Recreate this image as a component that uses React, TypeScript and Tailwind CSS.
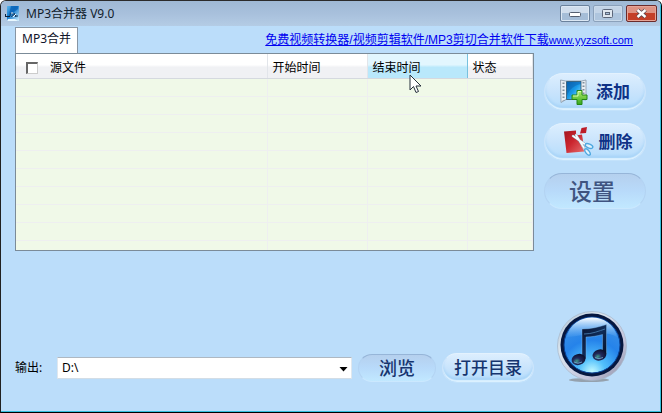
import React from 'react';

const COLUMNS = [
  { label: '源文件', width: 'w-[251px]' },
  { label: '开始时间', width: 'w-[100px]' },
  { label: '结束时间', width: 'w-[100px]', hot: true },
  { label: '状态', width: '' },
];

const EMPTY_ROWS = Array.from({ length: 10 }, (_, i) => i);

const AppIcon = () => (
  <svg width="15" height="16" viewBox="0 0 15 16" aria-hidden="true">
    <defs>
      <linearGradient id="appBg" x1="0" y1="0" x2="1" y2="1">
        <stop offset="0" stopColor="#5fb8ec" />
        <stop offset="0.4" stopColor="#0f78cc" />
        <stop offset="1" stopColor="#d4f2ff" />
      </linearGradient>
    </defs>
    <rect x="2" width="12" height="15" fill="url(#appBg)" />
    <path d="M6 0h7v3L9 6 4 8z" fill="#0a63b8" opacity="0.8" />
    <path d="M0 8h1v3H0zM1 10h4v1H1z" fill="#0a2440" />
    <path d="M5 10c0-3 2-4 3-2s-2 3-2 2M9 7l2 4M10 10h3" fill="none" stroke="#0b2f55" />
    <path d="M6 7h2M8 11l3-3" stroke="#eefaff" />
    <path d="M3 13h7l3 2H2z" fill="#e9f8ff" />
  </svg>
);

const FilmAddIcon = () => (
  <svg width="28" height="26" viewBox="0 0 28 26" aria-hidden="true">
    <defs>
      <linearGradient id="film" x1="0" y1="0" x2="1" y2="1">
        <stop offset="0" stopColor="#0565b4" />
        <stop offset="0.5" stopColor="#199ae8" />
        <stop offset="1" stopColor="#9ce6ff" />
      </linearGradient>
      <linearGradient id="plus" x1="0" y1="0" x2="0" y2="1">
        <stop offset="0" stopColor="#b5f06a" />
        <stop offset="1" stopColor="#34a51d" />
      </linearGradient>
    </defs>
    <path d="M0.500 1l5 1h16l4.500-1v20l-4-0.500H6L1 23.500z" fill="#e9eef4" stroke="#8695a5" strokeWidth="0.8" />
    <path d="M6.500 2.500h14.500v18H6.500z" fill="url(#film)" stroke="#31566f" strokeWidth="0.8" />
    <path d="M7 17c2-7 8-11 14-12V3H7z" fill="#0a5ba8" opacity="0.45" />
    <path d="M3.500 3.500v18M23.500 3v17" stroke="#7f8d9b" strokeWidth="2" strokeDasharray="1.500 2" />
    <path d="M17 11.500h5v4.500h5v4.500h-5v5h-5v-5h-5V16h5z" fill="url(#plus)" stroke="#248816" />
    <path d="M18 12.500h3M13 17h5v-4" fill="none" stroke="#e1ffc0" strokeWidth="0.9" />
  </svg>
);

const CutIcon = () => (
  <svg width="31" height="30" viewBox="0 0 31 30" aria-hidden="true">
    <defs>
      <linearGradient id="cutRed" x1="0" y1="0" x2="1" y2="1">
        <stop offset="0" stopColor="#a2151f" />
        <stop offset="0.45" stopColor="#cb252e" />
        <stop offset="1" stopColor="#e57070" />
      </linearGradient>
    </defs>
    <path d="M0 4.500L12 3.500v5l6-1 1 6-2 5 3.500 6L2.500 26z" fill="url(#cutRed)" />
    <path d="M17.500 1l5.500-1-1 6-6 0.500z" fill="#bd1c27" />
    <path d="M9 9l13 9M12 8l8 13" stroke="#8799ab" strokeWidth="2.600" strokeLinecap="round" />
    <path d="M9 9l13 9M12 8l8 13" stroke="#f6fafc" strokeWidth="1.700" strokeLinecap="round" />
    <ellipse cx="25" cy="19" rx="4" ry="2" transform="rotate(22 25 19)" fill="#e3f3fd" stroke="#4ea8e0" strokeWidth="1.400" />
    <ellipse cx="23.500" cy="25" rx="1.800" ry="3.800" transform="rotate(-38 23.500 25)" fill="#e3f3fd" stroke="#4ea8e0" strokeWidth="1.400" />
  </svg>
);

const MusicDisc = () => (
  <svg width="72" height="72" viewBox="0 0 72 72" role="img" aria-label="MP3">
    <defs>
      <linearGradient id="rim" x1="0" y1="0" x2="1" y2="1">
        <stop offset="0" stopColor="#a9bccf" />
        <stop offset="0.3" stopColor="#dbe6ef" />
        <stop offset="0.7" stopColor="#c3c4dc" />
        <stop offset="1" stopColor="#85889c" />
      </linearGradient>
      <radialGradient id="disc" cx="0.5" cy="0.98" r="0.95">
        <stop offset="0" stopColor="#c6faff" />
        <stop offset="0.25" stopColor="#52c0fc" />
        <stop offset="0.6" stopColor="#2583ea" />
        <stop offset="1" stopColor="#3d92e6" />
      </radialGradient>
      <linearGradient id="shine" x1="0" y1="0" x2="0" y2="1">
        <stop offset="0" stopColor="#fff" />
        <stop offset="1" stopColor="#8cc8ff" stopOpacity="0.1" />
      </linearGradient>
      <linearGradient id="note" x1="0" y1="0" x2="1" y2="1">
        <stop offset="0" stopColor="#0a1430" />
        <stop offset="0.5" stopColor="#0f2c58" />
        <stop offset="1" stopColor="#050d20" />
      </linearGradient>
      <radialGradient id="noteHead" cx="0.35" cy="0.6" r="0.7">
        <stop offset="0" stopColor="#3f9a8c" />
        <stop offset="0.4" stopColor="#222a5c" />
        <stop offset="1" stopColor="#070d26" />
      </radialGradient>
    </defs>
    <ellipse cx="33" cy="69" rx="20" ry="2" fill="#77706e" opacity="0.55" />
    <circle cx="36" cy="35" r="34.500" fill="url(#rim)" stroke="#a6b6c8" strokeWidth="0.7" />
    <circle cx="36" cy="34" r="31.500" fill="#06173f" />
    <circle cx="36" cy="34" r="28" fill="url(#disc)" stroke="#0a4296" />
    <path d="M11 26C16 0 56 0 61 26C48 18 27 25 11 26z" fill="url(#shine)" />
    <path d="M26 18C35 18 43 16 50.500 13.500V43h-4V23.500C41 25 36 26 30 26V48h-4z" fill="url(#note)" stroke="#8cc3f0" strokeWidth="0.400" />
    <ellipse cx="22.500" cy="48.500" rx="7" ry="5.500" transform="rotate(-15 22.500 48.500)" fill="url(#noteHead)" />
    <ellipse cx="43.500" cy="44" rx="7" ry="5.500" transform="rotate(-15 43.500 44)" fill="url(#noteHead)" />
    <path d="M28 23c8 0 15-3 21-5" fill="none" stroke="#3f6f9f" />
    <path d="M18 51q4 2.500 8 0M39 46.500q4 2.500 8 0" fill="none" stroke="#79b4d8" strokeWidth="0.8" />
  </svg>
);

type PillProps = { className: string; children: React.ReactNode };

const Pill = ({ className, children }: PillProps) => (
  <button
    type="button"
    className={`flex items-center justify-center rounded-full border bg-linear-to-b whitespace-nowrap ${className}`}
  >
    {children}
  </button>
);

const RAISED =
  'from-[#dceefe] via-[#c9e4fc] to-[#b3dcfc] border-t-[#e3f2fe] border-x-[#cde5fb] border-b-[#c3e2fb] shadow-[inset_0_-2px_1px_#dcf1ff,inset_0_-4px_3px_#a5d2f7]';
const SUNKEN =
  'from-[#b5d0ee] via-[#b8dafa] to-[#c1e8ff] border-t-[#96b5d8] border-x-[#b3d3f2] border-b-[#cbe8fe]';

const TitleBar = () => (
  <header className="flex h-[25px] shrink-0 items-center bg-linear-to-b from-[#9fb9d5] via-[#a8c0dc] to-[#b4cce5] pr-[3px] pl-1">
    <AppIcon />
    <h1 className="ml-1.5 text-[12px] text-[#111c2b]">MP3合并器 V9.0</h1>
    <div className="ml-auto flex h-[17px] gap-[3px]">
      <button type="button" aria-label="最小化" className="flex w-[30px] items-center justify-center rounded-xs border border-[#6a819c] bg-linear-to-b from-[#d0ddec] from-45% to-[#a5bdd7] to-50% shadow-[inset_0_0_0_1px_#dce8f4]">
        <svg width="12" height="6" viewBox="0 0 12 6"><rect x="0.500" y="1.500" width="11" height="4" rx="1" fill="#fff" stroke="#555f70" /></svg>
      </button>
      <button type="button" aria-label="最大化" className="flex w-[30px] items-center justify-center rounded-xs border border-[#8ba1bb] bg-linear-to-b from-[#c3d4e7] from-45% to-[#aec5de] to-50% shadow-[inset_0_0_0_1px_#c9daeb]">
        <svg width="12" height="10" viewBox="0 0 12 10"><rect x="0.500" y="0.500" width="10" height="8" rx="1" fill="#dfe7f0" stroke="#5c677a" /><rect x="3.500" y="3.500" width="4" height="2" fill="#a8bfda" stroke="#5c677a" /></svg>
      </button>
      <button type="button" aria-label="关闭" className="flex w-[31px] items-center justify-center rounded-xs border border-[#6b2b2b] bg-linear-to-b from-[#de9283] from-45% to-[#c43f28] to-50% shadow-[inset_0_0_0_1px_#e6a497]">
        <svg width="13" height="11" viewBox="0 0 13 11"><path d="M2.500 2l8 7M10.500 2l-8 7" stroke="#54454f" strokeWidth="4" /><path d="M2.500 2l8 7M10.500 2l-8 7" stroke="#fff" strokeWidth="2.400" /></svg>
      </button>
    </div>
  </header>
);

const FileList = () => (
  <div className="relative h-[198px] overflow-hidden border border-[#7b8b98] bg-[#f0f9e8]">
    <table className="w-full table-fixed border-collapse text-left text-[12px] text-black">
      <thead>
        <tr className="h-6">
          {COLUMNS.map((col, i) => (
            <th
              key={col.label}
              scope="col"
              className={`border-b border-[#d5d9df] p-0 font-normal ${col.width} ${
                col.hot
                  ? 'border-x border-x-[#77c1df] bg-linear-to-b from-[#e2f6fe] from-45% to-[#b9e8fb] to-55%'
                  : 'border-r border-r-[#e2e5ea] bg-linear-to-b from-white from-45% to-[#f0f1f4] to-55%'
              }`}
            >
              <div className={`flex h-[23px] items-center pt-1 ${i === 0 ? 'pl-2.5' : 'pl-[5px]'}`}>
                {i === 0 && (
                  <input
                    type="checkbox"
                    aria-label="全选"
                    className="mr-3 size-3 appearance-none border-t-2 border-r border-b border-l-2 border-t-[#666] border-r-[#ccc] border-b-[#ccc] border-l-[#666] bg-white checked:bg-[#4b7ab0]"
                  />
                )}
                {col.label}
              </div>
            </th>
          ))}
        </tr>
      </thead>
      <tbody>
        {EMPTY_ROWS.map((row) => (
          <tr key={row} className="h-[18px]">
            {COLUMNS.map((col) => (
              <td key={col.label} className="border-r border-b border-[#eeeff0] p-0" />
            ))}
          </tr>
        ))}
      </tbody>
    </table>
    <svg className="pointer-events-none absolute top-5 left-[393px]" width="13" height="20" viewBox="0 0 13 20">
      <path d="M1 1v15l3.500-3.500L7 18.500l2.500-1L7 12h5z" fill="#fff" stroke="#26303c" />
    </svg>
  </div>
);

const App: React.FC = () => {
  return (
    <div className="flex min-h-screen flex-col overflow-hidden rounded-t-md border border-t-[#2b2b2b] border-r-black border-b-black border-l-[#202020] bg-[#bbddfa] font-['Noto_Sans','Noto_Sans_CJK_SC',sans-serif]">
      <div className="flex flex-1 flex-col border-r border-b border-[#35bfdc]">
        <TitleBar />

        <main className="flex flex-1 flex-col pr-3.5 pb-7 pl-3.5">
          <div className="flex h-[27px] items-end justify-between pr-[13px]">
            <div role="tablist">
              <button
                type="button"
                role="tab"
                aria-selected="true"
                className="block h-[26px] border border-b-0 border-[#8795a4] bg-white pr-1.5 pb-1 pl-1.5 text-[12px] text-[#10132a]"
              >
                MP3合并
              </button>
            </div>
            <a
              href="#download"
              className="mb-1 font-['Liberation_Sans','Noto_Sans_CJK_SC',sans-serif] text-[12px] whitespace-nowrap text-[#0000f0] underline"
            >
              免费视频转换器/视频剪辑软件/MP3剪切合并软件下载
              <span className="text-[11px]">www.yyzsoft.com</span>
            </a>
          </div>

          <div className="flex flex-1 gap-2.5">
            <div className="flex min-w-0 flex-1 flex-col">
              <FileList />
              <form className="mt-auto flex items-center" onSubmit={(e) => e.preventDefault()}>
                <label htmlFor="output" className="w-[42px] text-[12px] text-black">
                  输出:
                </label>
                <div className="relative flex-1">
                  <select
                    id="output"
                    className="block h-[22px] w-full appearance-none border border-t-[#aeb8c2] border-r-[#dfe7ee] border-b-[#d3dde6] border-l-[#dfe7ee] bg-white pl-1 text-[12px] text-black"
                  >
                    <option>D:\</option>
                  </select>
                  <svg className="pointer-events-none absolute top-2.5 right-1" width="9" height="5" viewBox="0 0 9 5">
                    <path d="M0.500 0h8l-4 4.500z" fill="#000" />
                  </svg>
                </div>
                <Pill className={`ml-1.5 h-7 w-[78px] text-[18px] font-medium text-[#16356f] ${SUNKEN}`}>浏览</Pill>
                <Pill className={`ml-1.5 h-[30px] w-[92px] text-[17px] font-medium text-[#16356f] ${RAISED}`}>
                  打开目录
                </Pill>
              </form>
            </div>

            <aside className="flex w-[102px] flex-col pt-5">
              <Pill className={`h-[38px] gap-2 text-[17px] font-bold text-[#0f3286] ${RAISED}`}>
                <FilmAddIcon />
                添加
              </Pill>
              <Pill className={`mt-3 h-[38px] gap-1 pl-1.5 text-[17px] font-bold text-[#0f3286] ${RAISED}`}>
                <CutIcon />
                删除
              </Pill>
              <Pill className={`mt-3 h-9 pr-1.5 text-[23px] font-medium text-[#3f5480] ${SUNKEN}`}>设置</Pill>
              <div className="mt-auto ml-3">
                <MusicDisc />
              </div>
            </aside>
          </div>
        </main>
      </div>
    </div>
  );
};

export default App;
